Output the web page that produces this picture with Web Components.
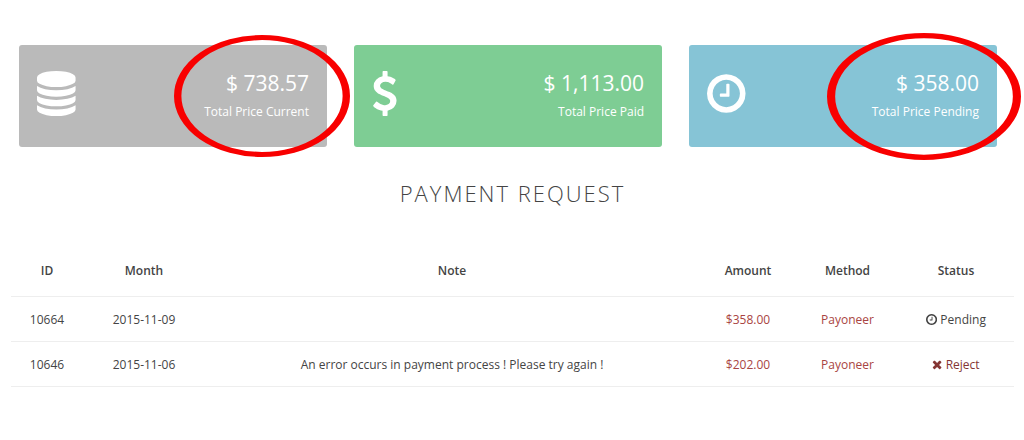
<!DOCTYPE html>
<html lang="en">
<head>
<meta charset="utf-8">
<meta name="viewport" content="width=device-width, initial-scale=1">
<title>Payment Request</title>
<style>
  body {
    margin: 0;
    background: #fff;
    color: #444;
    font: 12px/20px "Open Sans", sans-serif;
  }
</style>
</head>
<body>
<payment-page>
  <stat-card slot="stats" icon="database" color="#bababa" ring="small">
    <span slot="value">$ 738.57</span>
    <span slot="label">Total Price Current</span>
  </stat-card>
  <stat-card slot="stats" icon="dollar" color="#7ecd94">
    <span slot="value">$ 1,113.00</span>
    <span slot="label">Total Price Paid</span>
  </stat-card>
  <stat-card slot="stats" icon="clock" color="#86c4d6" ring="large">
    <span slot="value">$ 358.00</span>
    <span slot="label">Total Price Pending</span>
  </stat-card>
  <span slot="title">PAYMENT REQUEST</span>
  <payment-table></payment-table>
</payment-page>

<script>
'use strict';

// viewBox and path of each icon
const icons = {
  database: {
    box: '0 0 1536 1792',
    path: 'M768 768q237 0 443-43t325-127v170q0 69-103 128t-280 93.5-385 34.5-385-34.5-280-93.5-103-128v-170q119 84 325 127t443 43zm0 768q237 0 443-43t325-127v170q0 69-103 128t-280 93.5-385 34.5-385-34.5-280-93.5-103-128v-170q119 84 325 127t443 43zm0-384q237 0 443-43t325-127v170q0 69-103 128t-280 93.5-385 34.5-385-34.5-280-93.5-103-128v-170q119 84 325 127t443 43zm0-1152q208 0 385 34.5t280 93.5 103 128v128q0 69-103 128t-280 93.5-385 34.5-385-34.5-280-93.5-103-128v-128q0-69 103-128t280-93.5 385-34.5z'
  },
  dollar: {
    box: '384 0 1024 1792',
    path: 'M1362 1185q0 153-99.5 263.5t-258.5 136.5v175q0 14-9 23t-23 9h-135q-13 0-22.5-9.5t-9.5-22.5v-175q-66-9-127.5-31t-101.5-44.5-74-48-46.5-37.5-17.5-18q-17-21-2-41l103-135q7-10 23-12 15-2 24 9l2 2q113 99 243 125 37 8 74 8 81 0 142.5-43t61.5-122q0-28-15-53t-33.5-42-58.5-37.5-66-32-80-32.5q-39-16-61.5-25t-61.5-26.5-62.5-31-56.5-35.5-53.5-42.5-43.5-49-35.5-58-21-66.5-8.5-78q0-138 98-242t255-134v-180q0-13 9.5-22.5t22.5-9.5h135q14 0 23 9t9 23v176q57 6 110.5 23t87 33.5 63.5 37.5 39 29 15 14q17 18 5 38l-81 146q-8 15-23 16-14 3-27-7-3-3-14.5-12t-39-26.5-58.5-32-74.5-26-85.5-11.5q-95 0-155 43t-60 111q0 26 8.5 48t29.5 41.5 39.5 33 56 31 60.5 27 70 27.5q53 20 81 31.5t76 35 75.5 42.5 62 50 53 63.5 31.5 76.5 13 94z'
  },
  clock: {
    box: '128 0 1536 1792',
    path: 'M1024 544v448q0 14-9 23t-23 9h-320q-14 0-23-9t-9-23v-64q0-14 9-23t23-9h224v-352q0-14 9-23t23-9h64q14 0 23 9t9 23zm416 352q0-148-73-273t-198-198-273-73-273 73-198 198-73 273 73 273 198 198 273 73 273-73 198-198 73-273zm224 0q0 209-103 385.5t-279.5 279.5-385.5 103-385.5-103-279.5-279.5-103-385.5 103-385.5 279.5-279.5 385.5-103 385.5 103 279.5 279.5 103 385.5z'
  },
  times: {
    box: '192 0 1408 1792',
    path: 'M1490 1322q0 40-28 68l-136 136q-28 28-68 28t-68-28l-294-294-294 294q-28 28-68 28t-68-28l-136-136q-28-28-28-68t28-68l294-294-294-294q-28-28-28-68t28-68l136-136q28-28 68-28t68 28l294 294 294-294q28-28 68-28t68 28l136 136q28 28 28 68t-28 68l-294 294 294 294q28 28 28 68z'
  }
};

const payments = [
  {id: '10664', month: '2015-11-09', note: '', amount: '$358.00', method: 'Payoneer', status: 'Pending'},
  {id: '10646', month: '2015-11-06', note: 'An error occurs in payment process ! Please try again !', amount: '$202.00', method: 'Payoneer', status: 'Reject'}
];

class FaIcon extends HTMLElement {
  constructor() {
    super();
    this.attachShadow({mode: 'open'});
  }

  connectedCallback() {
    const icon = icons[this.getAttribute('name')];
    this.shadowRoot.innerHTML = `
      <style>
        :host { display: inline-block; }
        svg { display: block; height: 1em; width: auto; fill: currentColor; }
      </style>
      <svg viewBox="${icon.box}" aria-hidden="true"><path d="${icon.path}"/></svg>
    `;
  }
}

class StatCard extends HTMLElement {
  constructor() {
    super();
    this.attachShadow({mode: 'open'});
  }

  connectedCallback() {
    // the ring is stretched, so its stroke gets thinner at top and bottom
    const ring = this.hasAttribute('ring') ? `
      <svg class="ring" viewBox="0 0 100 100" preserveAspectRatio="none" aria-hidden="true">
        <circle cx="50" cy="50" r="47.9"/>
      </svg>` : '';
    this.shadowRoot.innerHTML = `
      <style>
        :host {
          position: relative;
          display: flex;
          justify-content: space-between;
          align-items: flex-start;
          padding: 22px 18px;
          border-radius: 3px;
          background: ${this.getAttribute('color')};
          color: #fff;
        }
        fa-icon { font-size: 45px; margin-top: 4px; }
        .text { text-align: right; }
        .value { font-size: 21px; line-height: 32px; }
        .label { line-height: 26px; }
        .ring {
          position: absolute;
          top: -10px;
          right: -23px;
          width: 176px;
          height: 122px;
          fill: none;
          stroke: #f80000;
          stroke-width: 4.2;
        }
        :host([ring="large"]) .ring {
          top: -12px;
          right: -24px;
          width: 194px;
          height: 127px;
        }
      </style>
      <fa-icon name="${this.getAttribute('icon')}"></fa-icon>
      <div class="text">
        <div class="value"><slot name="value"></slot></div>
        <div class="label"><slot name="label"></slot></div>
      </div>
      ${ring}
    `;
  }
}

class PaymentTable extends HTMLElement {
  constructor() {
    super();
    this.attachShadow({mode: 'open'});
    this.render();
  }

  renderRow(row) {
    const rejected = row.status === 'Reject';
    return `
      <tr>
        <td>${row.id}</td>
        <td>${row.month}</td>
        <td>${row.note}</td>
        <td class="money">${row.amount}</td>
        <td class="money">${row.method}</td>
        <td class="${rejected ? 'reject' : ''}">
          <fa-icon name="${rejected ? 'times' : 'clock'}"></fa-icon>
          ${row.status}
        </td>
      </tr>`;
  }

  render() {
    this.shadowRoot.innerHTML = `
      <style>
        :host { display: block; }
        table {
          width: 100%;
          table-layout: fixed;
          border-collapse: collapse;
        }
        th, td {
          padding: 13px 8px 11px;
          border-bottom: 1px solid #eee;
          text-align: center;
        }
        th { padding: 17px 8px 15px; font-weight: 600; }
        .id { width: 56px; }
        .month { width: 106px; }
        .amount { width: 82px; }
        .method { width: 85px; }
        .status { width: 100px; }
        .money { color: #a94442; }
        .reject { color: #843534; }
        fa-icon { font-size: 13px; vertical-align: -2px; }
      </style>
      <table>
        <thead>
          <tr>
            <th class="id" scope="col">ID</th>
            <th class="month" scope="col">Month</th>
            <th scope="col">Note</th>
            <th class="amount" scope="col">Amount</th>
            <th class="method" scope="col">Method</th>
            <th class="status" scope="col">Status</th>
          </tr>
        </thead>
        <tbody>${payments.map(row => this.renderRow(row)).join('')}</tbody>
      </table>
    `;
  }
}

class PaymentPage extends HTMLElement {
  constructor() {
    super();
    this.attachShadow({mode: 'open'});
    this.shadowRoot.innerHTML = `
      <style>
        :host { display: block; padding: 45px 10px 45px 11px; }
        .stats {
          display: grid;
          grid-template-columns: repeat(3, 1fr);
          gap: 27px;
          padding: 0 17px 0 8px;
        }
        h1 {
          margin: 29px 0 34px;
          font-size: 22px;
          font-weight: 300;
          line-height: 34px;
          letter-spacing: 2px;
          text-align: center;
        }
      </style>
      <div class="stats"><slot name="stats"></slot></div>
      <h1><slot name="title"></slot></h1>
      <slot></slot>
    `;
  }
}

customElements.define('fa-icon', FaIcon);
customElements.define('stat-card', StatCard);
customElements.define('payment-table', PaymentTable);
customElements.define('payment-page', PaymentPage);
</script>
</body>
</html>
